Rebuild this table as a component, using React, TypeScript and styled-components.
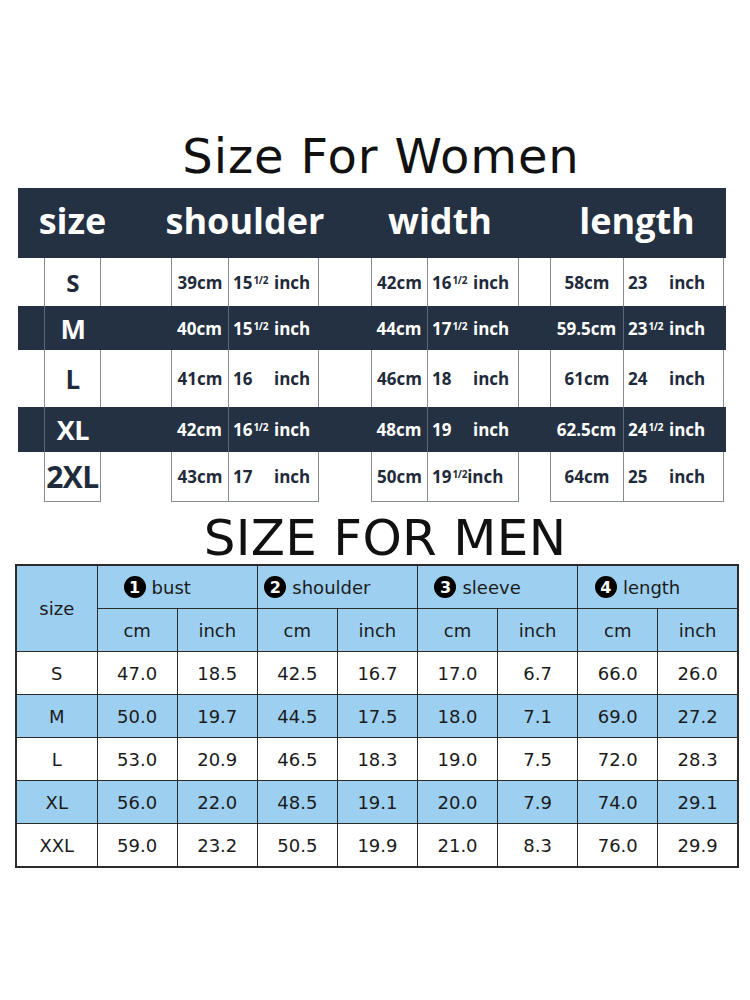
import React from 'react';
import styled, { createGlobalStyle } from 'styled-components';

const Global = createGlobalStyle`
  html, body { margin: 0; padding: 0; background: #ffffff; }
  body { font-family: "DejaVu Sans", Verdana, sans-serif; }
`;

const Page = styled.div`
  width: 750px;
  height: 1000px;
  padding-top: 132px;
  box-sizing: border-box;
  display: flex;
  flex-direction: column;
  overflow: hidden;
`;

const Title = styled.h1<{ $size: number; $shift: number; $ls: number }>`
  margin: 0;
  font-family: "DejaVu Sans", Verdana, sans-serif;
  font-weight: 400;
  font-size: ${(p) => p.$size}px;
  line-height: ${(p) => p.$size}px;
  letter-spacing: ${(p) => p.$ls}px;
  color: #111;
  text-align: center;
  padding-left: ${(p) => p.$shift}px;
`;

/* ---------- Women ---------- */
const COLS = '26px 57px 70px 57px 91px 52px 56px 92px 31px 73px 101px 2px';
const DARK = '#243142';
const INK = '#1f2a3a';
const LINE = '#878c94';

const WomenTable = styled.div`
  margin: 8px 0 0 18px;
  width: 708px;
  font-family: "Open Sans", "DejaVu Sans", sans-serif;
  font-weight: 700;
`;

const HeadRow = styled.div`
  display: grid;
  grid-template-columns: ${COLS};
  height: 70px;
  background: ${DARK};
  color: #fff;
`;

const HeadCell = styled.div<{ $from: number; $to: number; $nudge?: number }>`
  grid-column: ${(p) => p.$from} / ${(p) => p.$to};
  display: flex;
  align-items: center;
  justify-content: center;
  font-size: 36px;
  padding-bottom: 6px;
  white-space: nowrap;
  margin-left: ${(p) => p.$nudge ?? 0}px;
`;

const Row = styled.div<{ $dark?: boolean; $h: number }>`
  display: grid;
  grid-template-columns: ${COLS};
  height: ${(p) => p.$h}px;
  background: ${(p) => (p.$dark ? DARK : 'transparent')};
  color: ${(p) => (p.$dark ? '#fff' : INK)};
`;

const Box = styled.div<{ $dark?: boolean; $last?: boolean; $left?: boolean; $right?: boolean }>`
  box-sizing: border-box;
  display: flex;
  align-items: center;
  white-space: nowrap;
  border-left: ${(p) => (p.$left ? `1.5px solid ${p.$dark ? '#5d6775' : LINE}` : 'none')};
  border-right: ${(p) => (p.$right && !p.$dark ? `1.5px solid ${LINE}` : 'none')};
  border-bottom: ${(p) => (p.$last ? `1.5px solid ${LINE}` : 'none')};
`;

const SizeBox = styled(Box)<{ $fs: number }>`
  justify-content: center;
  font-size: ${(p) => p.$fs}px;
  letter-spacing: -0.5px;
`;

const Gap = styled.div``;

const CmBox = styled(Box)`
  justify-content: center;
  font-size: 17px;
`;

const InchBox = styled(Box)`
  padding-left: 4px;
  font-size: 17px;
`;

const Num = styled.span<{ $auto?: boolean }>`
  display: inline-block;
  width: ${(p) => (p.$auto ? 'auto' : '41px')};
  white-space: nowrap;
`;

const Frac = styled.span`
  font-size: 10px;
  vertical-align: 5px;
  line-height: 0;
  letter-spacing: -0.3px;
  margin-left: 1px;
`;

type Meas = { cm: string; n: string; half?: boolean; tight?: boolean };
const women: { size: string; fs: number; h: number; dark: boolean; m: Meas[] }[] = [
  { size: 'S', fs: 24, h: 48, dark: false, m: [{ cm: '39cm', n: '15', half: true }, { cm: '42cm', n: '16', half: true }, { cm: '58cm', n: '23' }] },
  { size: 'M', fs: 27, h: 44, dark: true, m: [{ cm: '40cm', n: '15', half: true }, { cm: '44cm', n: '17', half: true }, { cm: '59.5cm', n: '23', half: true }] },
  { size: 'L', fs: 26, h: 57, dark: false, m: [{ cm: '41cm', n: '16' }, { cm: '46cm', n: '18' }, { cm: '61cm', n: '24' }] },
  { size: 'XL', fs: 27, h: 45, dark: true, m: [{ cm: '42cm', n: '16', half: true }, { cm: '48cm', n: '19' }, { cm: '62.5cm', n: '24', half: true }] },
  { size: '2XL', fs: 30, h: 50, dark: false, m: [{ cm: '43cm', n: '17' }, { cm: '50cm', n: '19', half: true, tight: true }, { cm: '64cm', n: '25' }] },
];

/* ---------- Men ---------- */
const BLUE = '#9dcff0';
const BORDER = '#2b2b2b';

const MenTable = styled.table`
  margin: 1px 0 0 15px;
  border-collapse: collapse;
  table-layout: fixed;
  width: 724px;
  border: 2px solid ${BORDER};
  font-family: "DejaVu Sans", Verdana, sans-serif;
  font-size: 18px;
  color: #1b1b1b;
`;

const Th = styled.th`
  background: ${BLUE};
  border: 1.5px solid ${BORDER};
  font-weight: 400;
  height: 42px;
  padding: 0;
  text-align: center;
`;

const Td = styled.td<{ $blue: boolean }>`
  background: ${(p) => (p.$blue ? BLUE : '#fff')};
  border: 1.5px solid ${BORDER};
  height: 42px;
  padding: 0;
  text-align: center;
`;

const Group = styled.div`
  display: flex;
  align-items: center;
  justify-content: center;
  gap: 6px;
  white-space: nowrap;
`;

const Spacer = styled.span`
  flex: 0 1 34px;
  min-width: 0;
`;

const Badge = styled.span`
  width: 22px;
  height: 22px;
  flex: none;
  border-radius: 50%;
  background: #000;
  color: #fff;
  font-family: "DejaVu Sans", sans-serif;
  font-weight: 700;
  font-size: 16px;
  display: inline-flex;
  align-items: center;
  justify-content: center;
`;

const menHeads = ['bust', 'shoulder', 'sleeve', 'length'];
const men = [
  ['S', '47.0', '18.5', '42.5', '16.7', '17.0', '6.7', '66.0', '26.0'],
  ['M', '50.0', '19.7', '44.5', '17.5', '18.0', '7.1', '69.0', '27.2'],
  ['L', '53.0', '20.9', '46.5', '18.3', '19.0', '7.5', '72.0', '28.3'],
  ['XL', '56.0', '22.0', '48.5', '19.1', '20.0', '7.9', '74.0', '29.1'],
  ['XXL', '59.0', '23.2', '50.5', '19.9', '21.0', '8.3', '76.0', '29.9'],
];

export default function App() {
  return (
    <Page>
      <Global />
      <Title $size={48} $shift={12} $ls={0.9}>Size For Women</Title>
      <WomenTable>
        <HeadRow>
          <HeadCell $from={2} $to={3}>size</HeadCell>
          <HeadCell $from={4} $to={6}>shoulder</HeadCell>
          <HeadCell $from={7} $to={9} $nudge={-10}>width</HeadCell>
          <HeadCell $from={10} $to={12}>length</HeadCell>
        </HeadRow>
        {women.map((r, i) => {
          const last = i === women.length - 1;
          return (
            <Row key={r.size} $dark={r.dark} $h={r.h}>
              <Gap />
              <SizeBox $fs={r.fs} $dark={r.dark} $left $right $last={last}>{r.size}</SizeBox>
              {r.m.map((m, j) => (
                <React.Fragment key={j}>
                  <Gap />
                  <CmBox $dark={r.dark} $left={!r.dark} $last={last}>{m.cm}</CmBox>
                  <InchBox $dark={r.dark} $left $right $last={last}>
                    <Num $auto={m.tight}>
                      {m.n}
                      {m.half && <Frac>1/2</Frac>}
                    </Num>
                    {m.tight ? 'inch' : ' inch'}
                  </InchBox>
                </React.Fragment>
              ))}
              <Gap />
            </Row>
          );
        })}
      </WomenTable>

      <Title $size={50} $shift={20} $ls={0.3} style={{ marginTop: 11 }}>SIZE FOR MEN</Title>
      <MenTable>
        <colgroup>
          <col style={{ width: 81 }} />
          {Array.from({ length: 8 }).map((_, i) => (
            <col key={i} style={{ width: 80 }} />
          ))}
        </colgroup>
        <thead>
          <tr>
            <Th rowSpan={2}>size</Th>
            {menHeads.map((h, i) => (
              <Th key={h} colSpan={2}>
                <Group>
                  <Badge>{i + 1}</Badge>
                  <span>{h}</span>
                  <Spacer />
                </Group>
              </Th>
            ))}
          </tr>
          <tr>
            {menHeads.map((h) => (
              <React.Fragment key={h}>
                <Th>cm</Th>
                <Th>inch</Th>
              </React.Fragment>
            ))}
          </tr>
        </thead>
        <tbody>
          {men.map((r, i) => (
            <tr key={r[0]}>
              {r.map((v, j) => (
                <Td key={j} $blue={i % 2 === 1}>{v}</Td>
              ))}
            </tr>
          ))}
        </tbody>
      </MenTable>
    </Page>
  );
}
